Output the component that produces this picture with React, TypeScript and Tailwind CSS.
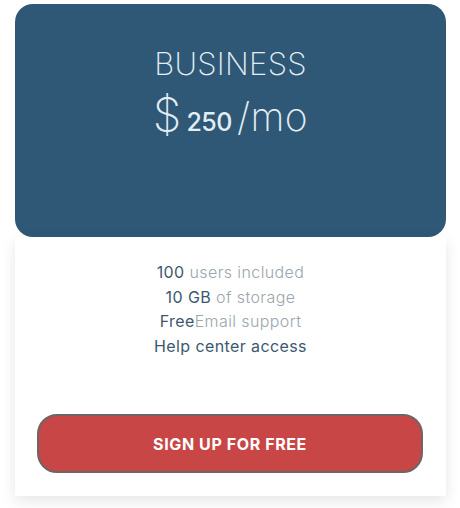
import React from 'react';

interface Feature {
  strong: string;
  rest: string;
}

const features: Feature[] = [
  { strong: '100', rest: ' users included' },
  { strong: '10 GB', rest: ' of storage' },
  { strong: 'Free', rest: 'Email support' },
];

const App: React.FC = () => {
  return (
    <div className="min-h-[508px] bg-white pt-[4px] font-['Inter','Liberation_Sans',sans-serif]">
      <div className="ml-[15px] w-[431px]">
        {/* plan header */}
        <div className="flex h-[233px] flex-col items-center rounded-[18px] bg-[#2e5876] pt-[40px] text-[#e3edf4]">
          <h2 className="text-[31px] font-extralight leading-[40px] tracking-[0.3px]">BUSINESS</h2>
          <div className="mt-[4px] flex items-baseline">
            <span className="text-[46px] font-extralight leading-[52px]">$</span>
            <span className="ml-[5px] text-[25px] font-medium tracking-[-0.5px]">250</span>
            <span className="ml-[5px] text-[39px] font-extralight tracking-[0.5px]">/mo</span>
          </div>
        </div>

        {/* plan body */}
        <div className="bg-white px-[22px] pb-[23px] pt-[23px] shadow-[0_5px_14px_rgba(0,0,0,0.1)]">
          <ul className="text-center text-[16px] font-light leading-[24.5px] tracking-[0.4px] text-[#9ba6ad]">
            {features.map((f) => (
              <li key={f.strong}>
                <span className="font-normal text-[#3c5870]">{f.strong}</span>
                {f.rest}
              </li>
            ))}
            <li className="font-normal text-[#3c5870]">Help center access</li>
          </ul>

          <button
            type="button"
            className="mt-[56px] h-[59px] w-[386px] rounded-[20px] border-2 border-[#6e6565] bg-[#c84646] text-[16px] font-bold tracking-[0.6px] text-white"
          >
            SIGN UP FOR FREE
          </button>
        </div>
      </div>
    </div>
  );
};

export default App;
